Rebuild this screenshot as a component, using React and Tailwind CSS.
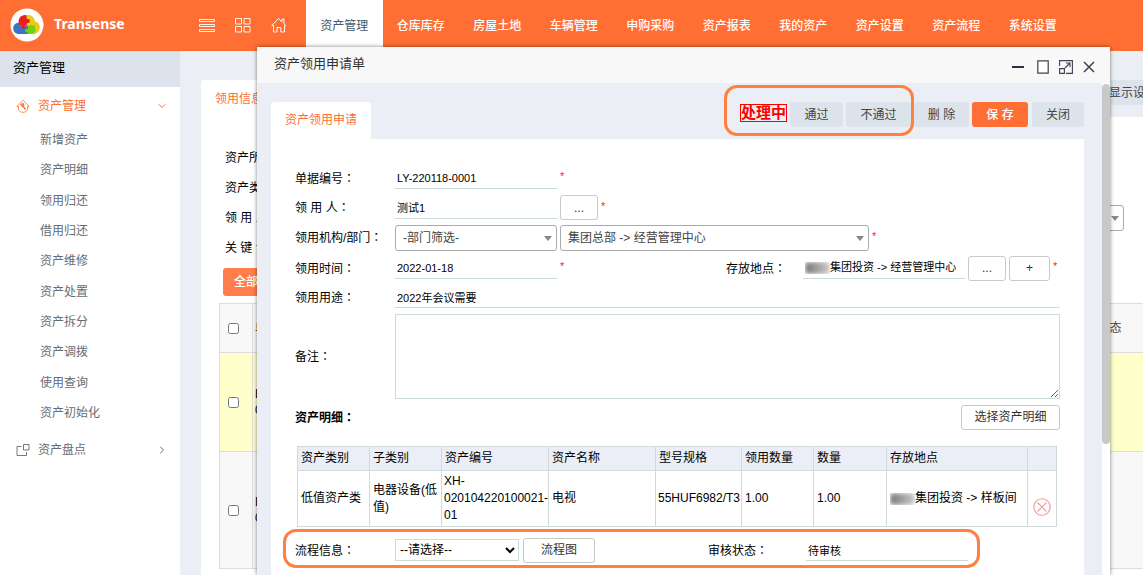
import { ChevronDown, ChevronRight } from "lucide-react";

const navItems = [
  "资产管理",
  "仓库库存",
  "房屋土地",
  "车辆管理",
  "申购采购",
  "资产报表",
  "我的资产",
  "资产设置",
  "资产流程",
  "系统设置",
];

const sideItems = [
  "新增资产",
  "资产明细",
  "领用归还",
  "借用归还",
  "资产维修",
  "资产处置",
  "资产拆分",
  "资产调拨",
  "使用查询",
  "资产初始化",
];

function Logo() {
  return (
    <svg viewBox="0 0 34 34" className="w-[34px] h-[34px]">
      <circle cx="17" cy="17" r="16.5" fill="#fff" />
      <path d="M16.500 7.200C20 6.200 24.500 8.500 25 13.500c3 .6 5 3 4.800 6S27.500 25.800 24 26l-3-4-4.500-4z" fill="#ecc91d" />
      <path d="M9 14.500c-4 .8-6 2.800-5.800 6S5.500 26 9 26h9V18H9z" fill="#3b74c4" />
      <path d="M16.500 7.200c-4-.8-8 2.300-7.800 6.300v4.200h3a1.900 1.900 0 1 0 3.200 0h2v-3a2 2 0 1 0 0-3.500z" fill="#e8201c" />
      <path d="M18 17.800h2a1.900 1.900 0 0 1 3 0h2v3a1.900 1.900 0 0 1-.5 3.200L23.500 26H18v-1.800a1.900 1.900 0 1 1 0-3.200z" fill="#72d30c" />
    </svg>
  );
}

function ListIcon() {
  return (
    <svg viewBox="0 0 16 14" className="w-4 h-3.5" fill="none" stroke="#fff">
      <path d="M.5 1.500h15v2H.5zM.5 6.500h15v2H.5zM.5 11.500h15v2H.5z" strokeWidth=".9" />
    </svg>
  );
}

function GridIcon() {
  return (
    <svg viewBox="0 0 16 16" className="w-4 h-4" fill="none" stroke="#fff">
      <path d="M.5 1.500h6V7h-6zM9 1.500h6V7H9zM.5 9.500h6V15h-6zM9 9.500h6V15H9z" strokeWidth=".9" />
    </svg>
  );
}

function HomeIcon() {
  return (
    <svg viewBox="0 0 16 16" className="w-4 h-4" fill="none" stroke="#fff">
      <path d="M.8 8.500 7.500 1.500l3.500 3.500V2h2v5l1.800 1.800H13.500V15H9.800v-4.500H6V15H2.500V8.500z" strokeWidth=".9" />
    </svg>
  );
}

function HouseToolIcon() {
  return (
    <svg viewBox="0 0 14 14" className="w-3.5 h-3.5" fill="none" stroke="#ff6e33">
      <path d="M.8 7.500 7 1.200l6.200 6.300M.8 7.500h1.700v3C3.500 12.500 5 13.300 7 13.300s3.500-.8 4.500-2.800v-3h1.700" strokeWidth=".8" />
      <path d="M6.500 6.500l3 4M5 5.500l2-.8.8 1.600-1.500 1z" strokeWidth="1.300" />
    </svg>
  );
}

function BoxesIcon() {
  return (
    <svg viewBox="0 0 14 14" className="w-3.5 h-3.5" fill="none" stroke="#777">
      <path d="M7.500 1.500h5.500V7H7.500zM5.500 3.500H1v9h9.500V9" />
    </svg>
  );
}

function MinusIcon() {
  return (
    <svg viewBox="0 0 14 14" className="w-3.5 h-3.5" stroke="#2e3142">
      <path d="M1 7h12" strokeWidth="2" />
    </svg>
  );
}

function WindowIcon() {
  return (
    <svg viewBox="0 0 12 14" className="w-3 h-3.5" fill="#fff" stroke="#3d4152">
      <path d="M.8.8h10.400v12.400H.8z" strokeWidth="1.200" />
    </svg>
  );
}

function ExpandIcon() {
  return (
    <svg viewBox="0 0 14 14" className="w-3.5 h-3.5" fill="none" stroke="#3d4152">
      <path d="M.6 6V.6h12.800v12.800H7M.6 8.600h4.800v4.800H.6zM6 8l4.500-4.500M7 3h4v4" strokeWidth="1.100" />
    </svg>
  );
}

function CloseIcon() {
  return (
    <svg viewBox="0 0 12 12" className="w-3 h-3" stroke="#3d4152">
      <path d="M1 1l10 10M11 1 1 11" strokeWidth="1.500" />
    </svg>
  );
}

function RemoveIcon() {
  return (
    <svg viewBox="0 0 18 18" className="w-[18px] h-[18px]" fill="none" stroke="#f59a9a">
      <circle cx="9" cy="9" r="8.200" strokeWidth="1.100" />
      <path d="M4.500 4.500l9 9M13.500 4.500l-9 9" strokeWidth="1.100" />
    </svg>
  );
}

function Label({ text, htmlFor, bold }) {
  return (
    <label
      htmlFor={htmlFor}
      className={
        bold
          ? "w-[100px] shrink-0 whitespace-nowrap font-bold"
          : "w-[100px] shrink-0 whitespace-nowrap"
      }
    >
      {text}
      <span className="font-['Noto_Sans_CJK_TC',sans-serif]">：</span>
    </label>
  );
}

function Star() {
  return <span className="w-[10px] shrink-0 pl-[3px] pb-1 text-[11px] leading-4 text-[#f22]">*</span>;
}

// Select with a small triangle on the right
function CaretSelect({ id, value, className }) {
  return (
    <div className={"relative shrink-0 " + className}>
      <select
        id={id}
        className="block w-full h-[26px] appearance-none rounded-[3px] border border-[#aaa] bg-white pl-[7px] pt-px text-[12px] text-[#444]"
      >
        <option>{value}</option>
      </select>
      <span className="pointer-events-none absolute right-[5px] top-[11px] border-x-4 border-t-[5px] border-x-transparent border-t-[#888]" />
    </div>
  );
}

function SmallButton({ children, className }) {
  return (
    <button className={"h-[25px] shrink-0 rounded-[3px] border border-[#c9c9c9] bg-white text-[#333] " + className}>
      {children}
    </button>
  );
}

function Masked() {
  return (
    <span className="shrink-0 overflow-hidden" aria-hidden="true">
      <span className="block h-3 w-[25px] rounded-sm bg-linear-to-r from-[#777] to-[#ccc] blur-[2px]" />
    </span>
  );
}

const lineInput = "h-[22px] border-b border-[#cbdada] bg-transparent pl-[2px] text-[11px] outline-none";

function Header() {
  return (
    <header className="flex h-[51px] bg-[#ff6e33] text-white">
      <div className="flex w-[306px] shrink-0 items-center pb-px pl-[10px]">
        <Logo />
        <span className="ml-[10px] pb-[3px] font-['Noto_Sans',sans-serif] text-[14px] font-bold">Transense</span>
        <div className="ml-auto flex gap-5 pr-[19px]">
          <button aria-label="列表" className="flex items-center"><ListIcon /></button>
          <button aria-label="应用"><GridIcon /></button>
          <button aria-label="首页"><HomeIcon /></button>
        </div>
      </div>
      <nav className="grid w-[765px] grid-cols-10">
        {navItems.map((item, i) => (
          <a
            key={item}
            href="#"
            className={
              i === 0
                ? "flex items-center justify-center bg-white text-[#43586d]"
                : "flex items-center justify-center font-medium"
            }
          >
            {item}
          </a>
        ))}
      </nav>
    </header>
  );
}

function Sidebar() {
  return (
    <aside className="w-[180px] shrink-0 bg-white text-[#666d75]">
      <h2 className="flex h-9 items-center bg-[#dce3ec] pb-[3px] pl-[13px] text-[13px] text-black">资产管理</h2>
      <a href="#" className="flex h-[38px] items-center pl-4 pr-3 text-[#ff6e33]">
        <HouseToolIcon />
        <span className="ml-2">资产管理</span>
        <ChevronDown className="ml-auto h-3 w-3" strokeWidth={2} />
      </a>
      <ul className="grid h-[303px] grid-rows-10">
        {sideItems.map((item) => (
          <li key={item}>
            <a href="#" className="flex h-full items-center pl-10">{item}</a>
          </li>
        ))}
      </ul>
      <a href="#" className="mt-1 flex h-9 items-center pl-4 pr-3">
        <BoxesIcon />
        <span className="ml-2">资产盘点</span>
        <ChevronRight className="ml-auto h-3 w-3" strokeWidth={2} />
      </a>
    </aside>
  );
}

// List page that lies behind the dialog
function ListPage() {
  return (
    <main className="min-w-0 flex-1 pl-[21px]">
      <div className="flex h-[66px] items-end">
        <a href="#" className="flex h-[37px] items-center rounded-t-[3px] bg-white px-[14px] text-[#ff6e33]">
          领用信息
        </a>
        <button className="mb-3 ml-auto h-[25px] w-[46px] overflow-hidden whitespace-nowrap bg-[#dce3eb] pl-3 text-left text-[#444]">
          显示设置
        </button>
      </div>
      <div className="h-full bg-white pl-[18px] pt-[26px]">
        <div className="pl-[6px] pr-[19px]">
          <div className="flex h-[30px] items-center">资产所属：</div>
          <div className="flex h-[30px] items-center">资产类别：</div>
          <div className="flex h-[30px] items-center">
            <label htmlFor="filterUser">领 用 人：</label>
            <CaretSelect id="filterUser" value="" className="ml-auto w-[160px]" />
          </div>
          <div className="flex h-[30px] items-center">关 键 词：</div>
        </div>
        <button className="ml-1 mt-[5px] h-7 rounded-[3px] bg-[#ff7e4b] px-[11px] font-medium text-white">
          全部导出
        </button>
        <table className="mt-[7px] w-full table-fixed border-collapse">
          <colgroup>
            <col className="w-[33px]" />
            <col />
            <col className="w-[60px]" />
          </colgroup>
          <thead>
            <tr className="h-[49px] bg-[#f8f8f8]">
              <th className="border border-[#ddd] px-2 align-middle">
                <input type="checkbox" aria-label="全选" className="block h-[11px] w-[11px]" />
              </th>
              <th className="border border-[#ddd] pl-[2px] text-left font-normal">单号</th>
              <th className="border-y border-[#ddd] pl-[14px] text-left font-normal text-[#444]">状态</th>
            </tr>
          </thead>
          <tbody>
            <tr className="h-[99px] bg-[#ffffcc]">
              <td className="border border-[#ddd] px-2">
                <input type="checkbox" aria-label="选择" className="block h-[11px] w-[11px]" />
              </td>
              <td className="border border-[#ddd] pl-[2px] leading-4">LY-<br />001</td>
              <td className="border-y border-[#ddd]" />
            </tr>
            <tr className="h-[117px] bg-[#f8f8f8]">
              <td className="border border-[#ddd] px-2">
                <input type="checkbox" aria-label="选择" className="block h-[11px] w-[11px]" />
              </td>
              <td className="border border-[#ddd] pl-[2px] leading-4">LY-<br />002</td>
              <td className="border-y border-[#ddd]" />
            </tr>
          </tbody>
        </table>
      </div>
    </main>
  );
}

function DetailTable() {
  const cell = "border border-[#cfdada] pl-[3px] text-left font-normal";
  return (
    <table className="mx-[2px] w-[calc(100%-5px)] table-fixed border-collapse leading-[17px]">
      <colgroup>
        <col className="w-[72px]" />
        <col className="w-[72px]" />
        <col className="w-[107px]" />
        <col className="w-[107px]" />
        <col className="w-[86px]" />
        <col className="w-[72px]" />
        <col className="w-[73px]" />
        <col />
        <col className="w-[29px]" />
      </colgroup>
      <thead>
        <tr className="h-6 bg-[#ebeef6]">
          <th className={cell}>资产类别</th>
          <th className={cell}>子类别</th>
          <th className={cell}>资产编号</th>
          <th className={cell}>资产名称</th>
          <th className={cell}>型号规格</th>
          <th className={cell}>领用数量</th>
          <th className={cell}>数量</th>
          <th className={cell}>存放地点</th>
          <th className={cell} />
        </tr>
      </thead>
      <tbody>
        <tr className="h-14">
          <td className={cell}>低值资产类</td>
          <td className={cell}>电器设备(低值)</td>
          <td className="border border-[#cfdada] pl-[2px] whitespace-nowrap">XH-<br />020104220100021-<br />01</td>
          <td className={cell}>电视</td>
          <td className="border border-[#cfdada] pl-[2px]">55HUF6982/T3</td>
          <td className={cell}>1.00</td>
          <td className={cell}>1.00</td>
          <td className={cell}>
            <div className="flex items-center">
              <Masked />
              集团投资 -&gt; 样板间
            </div>
          </td>
          <td className="border border-[#cfdada] pl-[5px] pt-4">
            <button aria-label="移除" className="block">
              <RemoveIcon />
            </button>
          </td>
        </tr>
      </tbody>
    </table>
  );
}

function Dialog() {
  const toolButton = "h-[25px] rounded-[3px] bg-[#dce3eb] text-[#444]";
  return (
    <section
      role="dialog"
      aria-label="资产领用申请单"
      className="absolute bottom-0 left-[257px] right-[33px] top-[47px] flex flex-col bg-[#ebeef4] shadow-[0_0_4px_rgba(0,0,0,0.5)]"
    >
      <div className="flex h-9 shrink-0 items-center bg-[#f8f8f8] pl-[17px] pr-[15px] text-[#333]">
        <h1 className="pb-[2px] text-[13px]">资产领用申请单</h1>
        <div className="ml-auto flex items-center pt-[3px]">
          <button aria-label="最小化"><MinusIcon /></button>
          <button aria-label="还原" className="ml-3"><WindowIcon /></button>
          <button aria-label="全屏" className="ml-[10px]"><ExpandIcon /></button>
          <button aria-label="关闭窗口" className="ml-[10px]"><CloseIcon /></button>
        </div>
      </div>

      <div className="flex min-h-0 flex-1">
        <div className="flex min-w-0 flex-1 flex-col pl-[14px] pr-[18px]">
          {/* Tab and toolbar */}
          <div className="relative flex h-14 shrink-0 items-end">
            <a href="#" className="flex h-[37px] items-center rounded-t-[3px] bg-white px-[14px] pb-[2px] text-[#ff6e33]">
              资产领用申请
            </a>
            <div className="mb-3 ml-auto flex items-center gap-[3px]">
              <span className="mb-[3px] border border-[#ff0000] text-[15px] font-bold leading-4 text-[#ff0000]">处理中</span>
              <button className={toolButton + " w-[53px]"}>通过</button>
              <button className={toolButton + " w-[65px]"}>不通过</button>
              <button className={toolButton + " w-[55px]"}>删 除</button>
              <button className="h-[25px] w-[56px] rounded-[3px] bg-[#ff6e33] font-medium text-white">保 存</button>
              <button className={toolButton + " ml-px w-[52px]"}>关闭</button>
            </div>
            <div className="pointer-events-none absolute right-[170px] top-[2px] h-[51px] w-[190px] rounded-[13px] border-[3px] border-[#ff8040]" />
          </div>

          {/* Form */}
          <form className="flex-1 bg-white px-6 pt-6">
            <div className="flex h-[30px] items-center">
              <Label text="单据编号" htmlFor="billNo" />
              <input id="billNo" defaultValue="LY-220118-0001" className={lineInput + " w-[162px]"} />
              <Star />
            </div>
            <div className="flex h-[29px] items-center">
              <Label text="领 用 人" htmlFor="user" />
              <input id="user" defaultValue="测试1" className={lineInput + " w-[162px]"} />
              <SmallButton className="ml-[3px] w-[38px]">...</SmallButton>
              <Star />
            </div>
            <div className="flex h-[31px] items-center">
              <Label text="领用机构/部门" htmlFor="dept" />
              <CaretSelect id="dept" value="-部门筛选-" className="w-[162px]" />
              <CaretSelect id="org" value="集团总部 -> 经营管理中心" className="ml-[3px] w-[309px]" />
              <Star />
            </div>
            <div className="flex h-[30px] items-center">
              <Label text="领用时间" htmlFor="date" />
              <input id="date" defaultValue="2022-01-18" className={lineInput + " w-[162px]"} />
              <Star />
              <label htmlFor="place" className="ml-auto w-[77px] shrink-0 whitespace-nowrap">
                存放地点
                <span className="font-['Noto_Sans_CJK_TC',sans-serif]">：</span>
              </label>
              <div className="flex h-[22px] w-[162px] items-center border-b border-[#cbdada] pl-[2px]">
                <Masked />
                <input id="place" defaultValue="集团投资 -> 经营管理中心" className="min-w-0 flex-1 text-[11px] outline-none" />
              </div>
              <SmallButton className="ml-[3px] w-[38px]">...</SmallButton>
              <SmallButton className="ml-[3px] w-[41px]">+</SmallButton>
              <Star />
            </div>
            <div className="flex h-[28px] items-center">
              <Label text="领用用途" htmlFor="purpose" />
              <input id="purpose" defaultValue="2022年会议需要" className={lineInput + " min-w-0 flex-1"} />
            </div>
            <div className="flex items-center pt-[3px]">
              <Label text="备注" htmlFor="remark" />
              <textarea id="remark" className="h-[85px] min-w-0 flex-1 border border-[#cbdada]" />
            </div>
            <div className="flex h-[47px] items-center justify-between pb-[11px]">
              <Label text="资产明细" bold />
              <SmallButton className="w-[99px]">选择资产明细</SmallButton>
            </div>
            <DetailTable />
            <div className="relative mt-[2px] flex h-[39px] items-center pt-[3px]">
              <Label text="流程信息" htmlFor="flow" />
              <select id="flow" className="h-[22px] w-[124px] border border-[#cbdada] bg-white text-[12px]">
                <option>--请选择--</option>
              </select>
              <SmallButton className="ml-1 w-[72px]">流程图</SmallButton>
              <label htmlFor="state" className="ml-auto w-[98px] shrink-0 whitespace-nowrap">
                审核状态
                <span className="font-['Noto_Sans_CJK_TC',sans-serif]">：</span>
              </label>
              <input id="state" defaultValue="待审核" className={lineInput + " mr-[92px] w-[162px]"} />
              <div className="pointer-events-none absolute -left-3 bottom-0 right-[80px] top-0 rounded-[13px] border-[3px] border-[#ff8040]" />
            </div>
          </form>
        </div>

        {/* Scrollbar */}
        <div className="w-2 shrink-0 bg-white pt-px">
          <div className="h-[360px] rounded bg-[#c9c9c9]" />
        </div>
      </div>
    </section>
  );
}

export default function App() {
  return (
    <div className="relative flex h-screen flex-col overflow-hidden bg-[#ebeef4] font-['Liberation_Sans','Noto_Sans_CJK_SC',sans-serif] text-[12px] text-black">
      <Header />
      <div className="flex min-h-0 flex-1">
        <Sidebar />
        <ListPage />
      </div>
      <Dialog />
    </div>
  );
}
